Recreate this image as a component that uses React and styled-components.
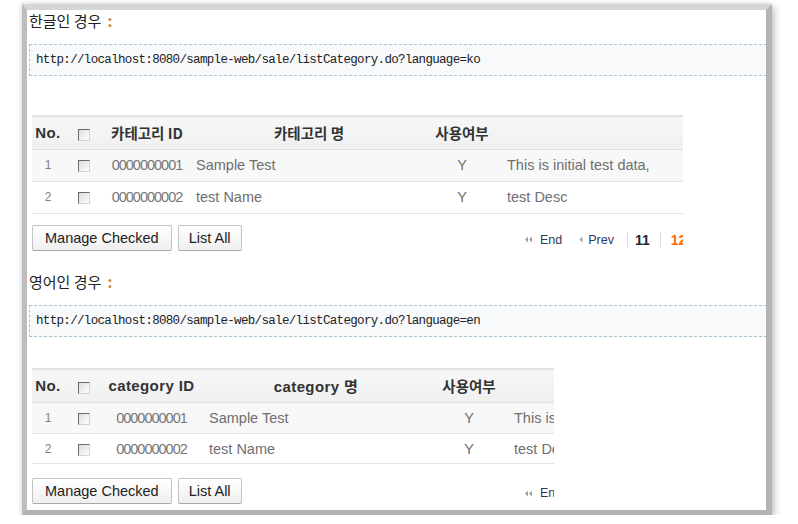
import React from "react";
import styled, { createGlobalStyle } from "styled-components";

const Global = createGlobalStyle`
  html, body { margin: 0; padding: 0; background: #ffffff; }
  body { font-family: "Liberation Sans", Arial, sans-serif; }
`;

const Frame = styled.div`
  margin: 4px 0 0 22px;
  width: 739px;
  height: 500px;
  border-top: 6px solid #d6d6d6;
  border-left: 5px solid #bdbdbd;
  border-right: 6px solid #b3b3b3;
  border-bottom: 5px solid #b3b3b3;
  box-shadow: 3px 3px 7px rgba(0, 0, 0, 0.22), -1px -1px 4px rgba(0, 0, 0, 0.1);
  background: #ffffff;
  overflow: hidden;
  display: flex;
  flex-direction: column;
`;

const Title = styled.div`
  height: 22px;
  line-height: 22px;
  padding-left: 2px;
  margin-top: ${(p) => p.$top}px;
  font-family: "Noto Sans CJK KR", sans-serif;
  font-size: 15px;
  color: #222;
  white-space: nowrap;
`;

const Colon = styled.span`
  color: #cf7a16;
  font-weight: bold;
  margin-left: 6px;
`;

const UrlBox = styled.div`
  margin: 12px 0 0 2px;
  width: 760px;
  height: 30px;
  flex-shrink: 0;
  border: 1px dashed #a8c4d4;
  background: #f7f9fb;
  display: flex;
  align-items: center;
  padding-left: 6px;
  font-family: "Liberation Mono", monospace;
  font-size: 12.5px;
  letter-spacing: -0.67px;
  color: #222;
  white-space: nowrap;
`;

const Clip = styled.div`
  margin: ${(p) => p.$top}px 0 0 5px;
  width: ${(p) => p.$width}px;
  overflow: hidden;
  flex-shrink: 0;
`;

const Table = styled.table`
  width: 800px;
  table-layout: fixed;
  border-collapse: collapse;
`;

const HeadRow = styled.tr`
  height: ${(p) => p.$h}px;
  background: linear-gradient(#f7f7f7, #f0f0f0);
  border-top: 2px solid #e2e2e2;
  border-bottom: 1px solid #e0e0e0;
`;

const Th = styled.th`
  padding: 0;
  font-size: ${(p) => (p.$latin ? 15 : 14.5)}px;
  font-family: ${(p) =>
    p.$latin
      ? `"Liberation Sans", Arial, "Noto Sans CJK KR", sans-serif`
      : `"Noto Sans CJK KR", "Liberation Sans", sans-serif`};
  font-weight: bold;
  color: #333;
  text-align: center;
  white-space: nowrap;
  letter-spacing: ${(p) => (p.$latin ? "0.4px" : "0")};
`;

const Row = styled.tr`
  height: ${(p) => p.$h}px;
  background: ${(p) => (p.$alt ? "#f8f8f8" : "#ffffff")};
  border-bottom: 1px solid #e3e3e3;
`;

const Td = styled.td`
  padding: 0 0 0 ${(p) => p.$pad || 0}px;
  font-size: 14.5px;
  color: #6f6f6f;
  text-align: ${(p) => p.$align || "center"};
  white-space: nowrap;
  overflow: hidden;
`;

const NumTd = styled(Td)`
  font-size: 12px;
  color: #8a8070;
`;

const IdTd = styled(Td)`
  letter-spacing: -1px;
  color: #777;
`;

const Check = styled.span`
  display: inline-block;
  width: 10px;
  height: 10px;
  vertical-align: middle;
  border-top: 1px solid #6a6a6a;
  border-left: 1px solid #6a6a6a;
  border-right: 1px solid #d4d4d4;
  border-bottom: 1px solid #d4d4d4;
  background: linear-gradient(135deg, #dcdcdc, #ffffff);
`;

const Bar = styled.div`
  margin-top: ${(p) => p.$top}px;
  width: 800px;
  display: flex;
  align-items: center;
`;

const Buttons = styled.div`
  width: 493px;
  display: flex;
  gap: 6px;
`;

const Button = styled.button`
  height: 26px;
  padding: 0 ${(p) => p.$pad}px;
  border: 1px solid #c3c3c3;
  border-bottom-color: #a9a9a9;
  border-radius: 2px;
  background: linear-gradient(#ffffff, #efefef);
  font-family: "Liberation Sans", Arial, sans-serif;
  font-size: 14.5px;
  color: #222;
  line-height: 24px;
`;

const Pager = styled.div`
  display: flex;
  align-items: center;
  margin-top: 4px;
  font-size: 12.5px;
  color: #2c3a5c;
  white-space: nowrap;
`;

const PageLink = styled.span`
  display: inline-flex;
  align-items: center;
  margin-right: ${(p) => p.$mr}px;
`;

const Arrow = styled.svg`
  margin-right: ${(p) => p.$mr}px;
`;

const Sep = styled.span`
  width: 1px;
  height: 15px;
  background: #dcdcdc;
  margin: 0 ${(p) => p.$r}px 0 0;
`;

const PageNum = styled.span`
  font-weight: bold;
  font-size: 14px;
  color: ${(p) => (p.$current ? "#ff6a00" : "#222a3a")};
  margin-right: ${(p) => p.$mr || 0}px;
`;

const DoubleLeft = () => (
  <Arrow $mr={8} width="7" height="7" viewBox="0 0 7 7">
    <polygon points="3,0.5 3,6.5 0,3.5" fill="#a0a0a0" />
    <polygon points="7,0.5 7,6.5 4,3.5" fill="#a0a0a0" />
  </Arrow>
);

const SingleLeft = () => (
  <Arrow $mr={5} width="4" height="7" viewBox="0 0 4 7">
    <polygon points="3.5,0.5 3.5,6.5 0.5,3.5" fill="#a0a0a0" />
  </Arrow>
);

const rows = [
  { no: 1, id: "0000000001", name: "Sample Test", use: "Y", desc: "This is initial test data," },
  { no: 2, id: "0000000002", name: "test Name", use: "Y", desc: "test Desc" },
];

function Section({ title, url, cfg }) {
  return (
    <>
      <Title $top={cfg.titleTop}>
        {title}
        <Colon>:</Colon>
      </Title>
      <UrlBox>{url}</UrlBox>
      <Clip $top={cfg.tableTop} $width={cfg.clip}>
        <Table>
          <colgroup>
            {cfg.cols.map((w, i) => (
              <col key={i} style={{ width: w }} />
            ))}
            <col />
          </colgroup>
          <thead>
            <HeadRow $h={cfg.headH}>
              <Th $latin>No.</Th>
              <Th>
                <Check />
              </Th>
              <Th $latin={cfg.latin}>{cfg.idHead}</Th>
              <Th $latin={cfg.latin}>{cfg.nameHead}</Th>
              <Th>사용여부</Th>
              <Th />
            </HeadRow>
          </thead>
          <tbody>
            {rows.map((r, i) => (
              <Row key={r.no} $alt={i === 0} $h={cfg.rowH[i]}>
                <NumTd>{r.no}</NumTd>
                <Td>
                  <Check />
                </Td>
                <IdTd>{r.id}</IdTd>
                <Td $align="left" $pad={cfg.namePad}>
                  {r.name}
                </Td>
                <Td>{r.use}</Td>
                <Td $align="left" $pad={cfg.descPad}>
                  {r.desc}
                </Td>
              </Row>
            ))}
          </tbody>
        </Table>
        <Bar $top={cfg.barTop}>
          <Buttons>
            <Button $pad={12}>Manage Checked</Button>
            <Button $pad={10}>List All</Button>
          </Buttons>
          <Pager>
            <DoubleLeft />
            <PageLink $mr={17}>End</PageLink>
            <SingleLeft />
            <PageLink $mr={13}>Prev</PageLink>
            <Sep $r={7} />
            <PageNum $mr={10}>11</PageNum>
            <Sep $r={10} />
            <PageNum $current>12</PageNum>
          </Pager>
        </Bar>
      </Clip>
    </>
  );
}

const koCfg = {
  titleTop: 0,
  tableTop: 39,
  clip: 651,
  cols: [32, 40, 86, 238, 68],
  headH: 33,
  rowH: [32, 32],
  latin: false,
  idHead: "카테고리 ID",
  nameHead: "카테고리 명",
  namePad: 6,
  descPad: 11,
  barTop: 11,
};

const enCfg = {
  titleTop: 20,
  tableTop: 31,
  clip: 522,
  cols: [32, 40, 95, 234, 72],
  headH: 34,
  rowH: [31, 30],
  latin: true,
  idHead: "category ID",
  nameHead: "category 명",
  namePad: 10,
  descPad: 9,
  barTop: 14,
};

export default function App() {
  return (
    <>
      <Global />
      <Frame>
        <Section
          title="한글인 경우"
          url="http://localhost:8080/sample-web/sale/listCategory.do?language=ko"
          cfg={koCfg}
        />
        <Section
          title="영어인 경우"
          url="http://localhost:8080/sample-web/sale/listCategory.do?language=en"
          cfg={enCfg}
        />
      </Frame>
    </>
  );
}
